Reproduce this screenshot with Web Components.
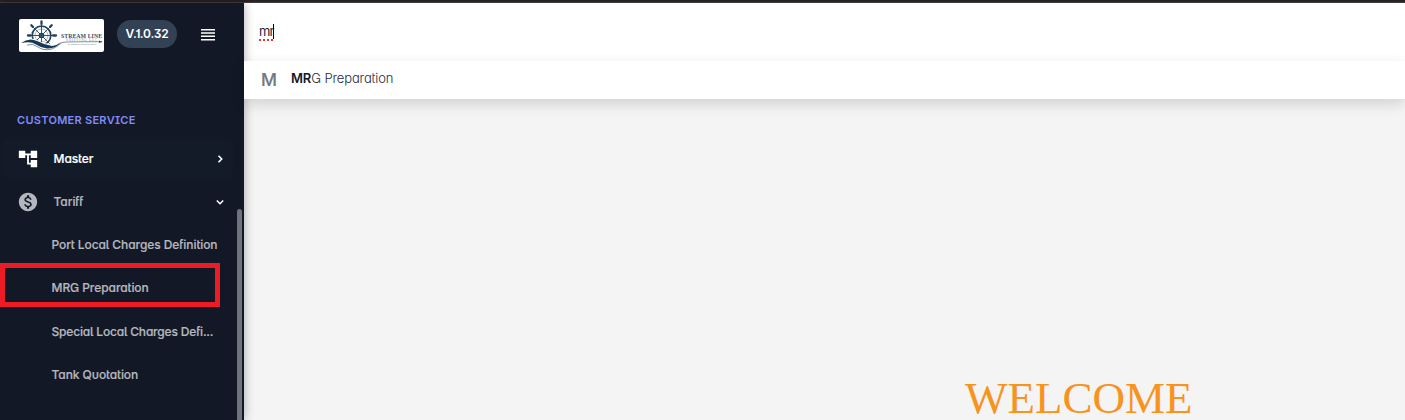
<!DOCTYPE html>
<html lang="en">
<head>
<meta charset="utf-8">
<title>Stream Line</title>
<style>
html,body{margin:0;height:100%;overflow:hidden}
body{font-family:Inter,"Liberation Sans",sans-serif;font-feature-settings:"cv11","salt"}
</style>
</head>
<body>
<app-shell></app-shell>
<script>
function define(name, html) {
  const t = document.createElement('template');
  t.innerHTML = html;
  customElements.define(name, class extends HTMLElement {
    constructor() {
      super();
      this.attachShadow({mode: 'open'}).append(t.content.cloneNode(true));
    }
  });
}

define('brand-logo', `
<style>:host{display:block;width:85px;height:33px;background:#fff;border-radius:2px;overflow:hidden}svg{display:block}</style>
<svg width="85" height="33" viewBox="0 0 85 33">
  <g fill="none" stroke="#24435f">
    <circle cx="22.500" cy="16.500" r="9.300" stroke-width="1.700"/>
    <circle cx="22.500" cy="16.500" r="6.500" stroke-width=".6" stroke="#7d93a5"/>
    <circle cx="22.500" cy="16.500" r="2.200" stroke-width="1.200"/>
    <path stroke-width=".9" d="M22.500 2V27M10 16.500H36M13.500 7.500 31.500 25.500M31.500 7.500 13.500 25.500"/>
    <path stroke-width="2.300" stroke-linecap="round" d="M22.500 2.300V5M12.300 6.300l1.600 1.600M32.700 6.300l-1.600 1.600M9 16.500h2.500M34 16.500h3"/>
  </g>
  <path fill="#fff" d="M3 22Q12 17 20 22T40 23V32H3Z"/>
  <path fill="#19395a" d="M2 24Q10 18 18 22T33 27Q38 26.500 42 23Q37 30 28 29.500Q22 29 17 25.500T2 24Z"/>
  <path fill="none" stroke="#587189" stroke-width=".8" d="M8 26Q14 24 19 28T33 30Q38 28 43 23.500Q45 22.700 83 22.700"/>
  <path fill="#314d66" d="M80 21.500 83.500 22.700 80 24Z"/>
  <text x="42" y="18.500" textLength="41" font-family="Liberation Serif,serif" font-weight="700" font-size="5.800" fill="#34506a">STREAM LINE</text>
  <text x="47" y="21.500" textLength="31" font-family="Liberation Serif,serif" font-size="3" fill="#6b8093">SHIPPING LLC</text>
  <text x="48" y="26" textLength="29" font-family="Liberation Serif,serif" font-style="italic" font-size="2.300" fill="#6b8093">The Difference Beyond the Source</text>
</svg>`);

define('version-badge', `
<style>:host{display:flex;box-sizing:border-box;width:60px;height:28px;margin:-4px 0 0 13px;align-items:center;justify-content:center;border-radius:14px;background:#334155;color:#fff;font-size:12px;font-weight:600;letter-spacing:-.22px}</style><slot></slot>`);

define('menu-button', `
<style>:host{display:block;margin:-2px 0 0 24px;width:14px;height:12px}svg{display:block}</style>
<svg width="14" height="12" fill="#fff"><path d="M0 0h14v1.500H0zM0 3.300h14v1.500H0zM0 6.600h14v1.500H0zM0 9.900h14v1.500H0z"/></svg>`);

define('nav-item', `
<style>
:host{display:flex;box-sizing:border-box;height:40px;margin:0 11px 3px 3px;padding:0 8px 0 14px;align-items:center;border-radius:6px;color:#b4b7be;font-size:12px;font-weight:500;line-height:20px;letter-spacing:-.07px;white-space:nowrap;-webkit-text-stroke:.2px currentColor}
:host([active]){background:#141b28;color:#fff}
:host([sub]){height:43.300px;margin:0 0 0 51.500px;padding:0}
:host([long]){letter-spacing:-.18px;padding-top:1px}
.label{flex:1}
</style><slot name="icon"></slot><span class="label"><slot></slot></span><slot name="arrow"></slot>`);

define('nav-icon', `
<style>:host{display:block;width:22px;height:22px;margin-right:14.500px}svg{display:none;width:22px;height:22px;fill:currentColor}:host([kind=money]) svg{width:20px;height:20px;margin:1px}:host([kind=tree]) .tree,:host([kind=money]) .money{display:block}</style>
<svg class="tree" viewBox="0 0 24 24"><path d="M22 11V3h-7v3H9V3H2v8h7V8h2v10h4v3h7v-8h-7v3h-2V8h2v3z"/></svg>
<svg class="money" viewBox="0 0 24 24"><path d="M12 1C5.930 1 1 5.930 1 12s4.930 11 11 11 11-4.930 11-11S18.070 1 12 1zm1.410 17.090V20h-2.670v-1.930c-1.710-.36-3.160-1.460-3.270-3.400h1.960c.1 1.050.82 1.870 2.650 1.870 1.960 0 2.400-.98 2.400-1.590 0-.83-.44-1.610-2.670-2.140-2.480-.6-4.180-1.620-4.180-3.670 0-1.720 1.390-2.840 3.110-3.210V4h2.670v1.950c1.860.45 2.790 1.860 2.850 3.390H14.300c-.05-1.110-.64-1.870-2.220-1.870-1.500 0-2.400.68-2.400 1.640 0 .84.65 1.390 2.670 1.910s4.180 1.390 4.180 3.910c-.01 1.830-1.380 2.830-3.120 3.160z"/></svg>`);

define('nav-arrow', `
<style>:host{display:block;width:10px;height:10px;color:#fff}svg{display:block}:host([open]){transform:rotate(90deg)}</style>
<svg width="10" height="10" fill="none" stroke="currentColor" stroke-width="1.600"><path d="M3.500 1.800 6.700 5 3.500 8.200"/></svg>`);

define('side-nav', `
<style>
:host{display:flex;flex-direction:column;position:relative;z-index:2;width:244px;flex:none;background:#121826;box-shadow:0 0 10px rgba(0,0,0,.32)}
header{display:flex;align-items:center;height:65px;padding-left:19px}
h2{box-sizing:border-box;margin:0;height:71px;padding:42px 0 0 17px;color:#818cf8;font-size:11px;font-weight:600;line-height:20px;letter-spacing:.28px}
.subs{margin-top:-2px}
.thumb{position:absolute;right:2px;top:206px;width:5px;height:230px;border-radius:3px;background:#70737c}
.mark{position:absolute;box-sizing:border-box;left:0;top:260px;width:220px;height:44px;border:5px solid #ed1c24}
</style>
<header><brand-logo></brand-logo><version-badge>V.1.0.32</version-badge><menu-button></menu-button></header>
<h2>CUSTOMER SERVICE</h2>
<nav>
<nav-item active><nav-icon slot="icon" kind="tree"></nav-icon>Master<nav-arrow slot="arrow"></nav-arrow></nav-item>
<nav-item><nav-icon slot="icon" kind="money"></nav-icon>Tariff<nav-arrow slot="arrow" open></nav-arrow></nav-item>
<div class="subs">
<nav-item sub>Port Local Charges Definition</nav-item>
<nav-item sub>MRG Preparation</nav-item>
<nav-item sub long>Special Local Charges Defi...</nav-item>
<nav-item sub>Tank Quotation</nav-item>
</div>
</nav>
<div class="thumb"></div><div class="mark"></div>`);

define('search-bar', `
<style>
:host{display:flex;align-items:center;box-sizing:border-box;height:58px;padding:0 0 2px 15px;background:#fff;font-size:13px;line-height:16px;color:#1e293b}
.q{text-decoration:underline dotted #f03030 1.500px;text-underline-offset:3px;letter-spacing:-.9px;font-weight:400}
i{width:1px;height:15px;background:#000}
</style><span class="q"><slot></slot></span><i></i>`);

define('search-result', `
<style>
:host{display:flex;position:relative;z-index:3;align-items:center;box-sizing:border-box;height:38px;padding:0 0 3px 17px;background:#fff;box-shadow:0 5px 14px rgba(0,0,0,.14);font-size:13px;color:#1e293b;font-weight:300}
.m{width:30px;font-size:17.500px;font-weight:500;color:#75787f;padding-top:2px;-webkit-text-stroke:.2px #75787f}
.t{letter-spacing:-.13px;margin-top:-1px}
b{font-weight:600;color:#111827}
</style><span class="m">M</span><span class="t"><b>MR</b>G Preparation</span>`);

define('welcome-panel', `
<style>:host{display:flex;box-sizing:border-box;flex:1;min-height:0;justify-content:flex-start;align-items:flex-start;background:#f4f4f4;padding:277px 0 0 721px;font:45px/44px "Liberation Serif",serif;font-feature-settings:normal;color:#f7931e}</style><slot></slot>`);

define('app-shell', `
<style>
:host{display:flex;flex-direction:column;height:420px;background:#f4f4f4}
.top{height:3px;flex:none;box-sizing:border-box;background:#242223;border-bottom:1px solid #493b3d}
.body{display:flex;flex:1;min-height:0}
main{display:flex;flex:1;flex-direction:column;min-width:0}
search-bar,search-result{flex:none}
</style>
<div class="top"></div>
<div class="body"><side-nav></side-nav>
<main><search-bar>mr</search-bar><search-result></search-result><welcome-panel>WELCOME</welcome-panel></main></div>`);
</script>
</body>
</html>
